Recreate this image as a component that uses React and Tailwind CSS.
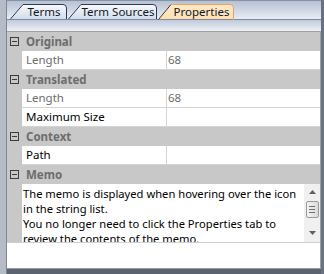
import React from "react";

const rows = [
  { type: "cat", label: "Original" },
  { type: "prop", label: "Length", value: "68", readOnly: true },
  { type: "cat", label: "Translated" },
  { type: "prop", label: "Length", value: "68", readOnly: true },
  { type: "prop", label: "Maximum Size", value: "" },
  { type: "cat", label: "Context" },
  { type: "prop", label: "Path", value: "" },
  { type: "cat", label: "Memo" },
];

const memo = [
  "The memo is displayed when hovering over the icon",
  "in the string list.",
  "You no longer need to click the Properties tab to",
  "review the contents of the memo.",
];

function Tab({ label, w, className, active }) {
  const id = "g" + label.replace(/\s/g, "");
  const shape = `M0.5 15 L13 0.5 L${w - 5} 0.5 Q${w - 1.5} 0.5 ${w - 1.5} 4 L${w - 1.5} 15`;
  return (
    <div className={`relative flex h-[15px] shrink-0 items-center justify-center pl-[10px] ${className}`}>
      <svg className="absolute inset-0" width={w} height="16" viewBox={`0 0 ${w} 16`}>
        <defs>
          <linearGradient id={id} x1="0" y1="0" x2="0" y2="1">
            <stop offset="0" stopColor={active ? "#ffe9c9" : "#f8fafd"} />
            <stop offset="1" stopColor={active ? "#ffdfb2" : "#d2dcea"} />
          </linearGradient>
        </defs>
        <path d={shape + " Z"} fill={`url(#${id})`} />
        {active ? (
          <>
            <path d="M0.5 15.5 L13 0.5" stroke="#3a3a3a" fill="none" />
            <path d={`M13 0.5 L${w - 5} 0.5 Q${w - 1.5} 0.5 ${w - 1.5} 4 L${w - 1.5} 16`} stroke="#eba356" fill="none" />
          </>
        ) : (
          <path d={shape} stroke="#2f3a52" fill="none" />
        )}
      </svg>
      <span className="relative whitespace-nowrap text-[11.5px] leading-none text-[#101828]">{label}</span>
    </div>
  );
}

function CategoryRow({ label }) {
  return (
    <div className="flex h-[19px] items-center bg-[#c8c8c8]">
      <div className="ml-[3px] flex h-[9px] w-[9px] items-center justify-center border border-[#3c3c3c]">
        <div className="h-px w-[5px] bg-[#3c3c3c]" />
      </div>
      <span className="ml-[7px] font-bold text-[#6d6d6d]">{label}</span>
    </div>
  );
}

function PropRow({ label, value, readOnly }) {
  const color = readOnly ? "text-[#6d6d6d]" : "text-black";
  return (
    <div className="flex h-[19px] bg-[#c8c8c8]">
      <div className="w-[15px] shrink-0" />
      <div className="flex flex-1 border-b border-[#d4d4d4] bg-white">
        <div className={`flex w-[145px] shrink-0 items-center border-r border-[#d4d4d4] pl-[4px] ${color}`}>{label}</div>
        <div className="flex flex-1 items-center pl-[1px] text-[#6d6d6d]">{value}</div>
      </div>
    </div>
  );
}

function Scrollbar() {
  return (
    <div className="flex w-[16px] shrink-0 flex-col items-center bg-[#f0f0f0]">
      <div className="flex h-[16px] items-center justify-center">
        <svg width="7" height="4" viewBox="0 0 7 4">
          <path d="M3.5 0 L7 4 L0 4 Z" fill="#606060" />
        </svg>
      </div>
      <div className="mt-px flex h-[17px] w-[13px] flex-col items-center justify-center gap-[2px] rounded-[2px] border border-[#9a9a9a] bg-gradient-to-r from-[#f4f4f4] to-[#dadada]">
        <div className="h-px w-[6px] bg-[#707070]" />
        <div className="h-px w-[6px] bg-[#707070]" />
        <div className="h-px w-[6px] bg-[#707070]" />
      </div>
      <div className="flex-1" />
      <div className="flex h-[16px] items-center justify-center pb-[2px]">
        <svg width="7" height="4" viewBox="0 0 7 4">
          <path d="M0 0 L7 0 L3.5 4 Z" fill="#606060" />
        </svg>
      </div>
    </div>
  );
}

export default function App() {
  return (
    <div className="flex h-[274px] w-[324px] overflow-hidden bg-[#b4bac4] font-['Noto_Sans',sans-serif] text-[11.5px] leading-none">
      <div className="w-[7px] shrink-0 border-r border-[#7e8796] bg-[#b6bcc6]" />

      <div className="flex min-w-0 flex-1 flex-col">
        <div className="flex h-[19px] items-end border-t border-[#8a93a3] bg-gradient-to-b from-[#b6c1d4] to-[#e9edf4] pl-[3px]">
          <Tab label="Terms" w={58} className="w-[58px]" />
          <Tab label="Term Sources" w={90} className="w-[90px]" />
          <Tab label="Properties" w={77} className="w-[77px]" active />
        </div>
        <div className="h-[13px] border-t border-[#7d8aa0] border-b border-b-[#a0a0a0] bg-gradient-to-b from-[#c0cadb] to-[#eef1f6]" />

        <div className="flex flex-1 flex-col border-r border-[#a0a0a0]">
          {rows.map((r, i) =>
            r.type === "cat" ? (
              <CategoryRow key={i} label={r.label} />
            ) : (
              <PropRow key={i} label={r.label} value={r.value} readOnly={r.readOnly} />
            )
          )}

          <div className="flex h-[58px] bg-[#c8c8c8]">
            <div className="w-[15px] shrink-0" />
            <div className="flex min-w-0 flex-1 bg-white">
              <div className="min-w-0 flex-1 overflow-hidden pl-[1px] pt-[2px] text-[11.2px] leading-[15px] text-black">
                {memo.map((line, i) => (
                  <div key={i} className="whitespace-nowrap">{line}</div>
                ))}
              </div>
              <Scrollbar />
            </div>
          </div>

          <div className="flex-1 border-t border-[#d0d0d0] bg-white" />
        </div>

        <div className="h-[6px] border-t border-[#9a9a9a] bg-[#5c6370]" />
      </div>

      <div className="w-[3px] shrink-0 bg-[#6a7282]" />
    </div>
  );
}
